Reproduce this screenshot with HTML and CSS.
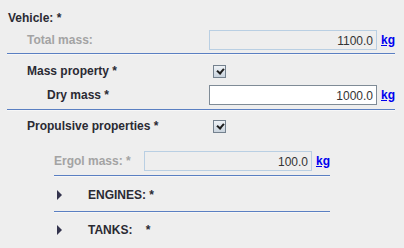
FILE: index.html
```html
<!DOCTYPE html>
<html lang="en">
<head>
    <meta charset="UTF-8">
    <title>Vehicle</title>
    <link rel="stylesheet" href="styles.css">
</head>
<body>
    <div class="panel">
        <div class="row title">Vehicle: *</div>

        <div class="row">
            <span class="label disabled">Total mass:</span>
            <div class="field readonly">1100.0</div>
            <a class="unit" href="#">kg</a>
        </div>
        <div class="sep"></div>

        <div class="row r-mass">
            <span class="label">Mass property *</span>
            <span class="check"></span>
        </div>
        <div class="row r-dry">
            <span class="label sub">Dry mass *</span>
            <div class="field">1000.0</div>
            <a class="unit" href="#">kg</a>
        </div>
        <div class="sep"></div>

        <div class="row r-prop">
            <span class="label">Propulsive properties *</span>
            <span class="check"></span>
        </div>

        <!-- sous-section propulsion -->
        <div class="propulsion">
            <div class="row r-ergol">
                <span class="label disabled">Ergol mass: *</span>
                <div class="field readonly small">100.0</div>
                <a class="unit" href="#">kg</a>
            </div>
            <div class="sep short"></div>
            <div class="row node">
                <span class="arrow"></span>
                <span class="node-label">ENGINES: *</span>
            </div>
            <div class="sep short s-tanks"></div>
            <div class="row node n-tanks">
                <span class="arrow"></span>
                <span class="node-label">TANKS:&nbsp;&nbsp;&nbsp; *</span>
            </div>
        </div>
    </div>
</body>
</html>
```

FILE: styles.css
```css
/* fond et police type Swing */
body {
    margin: 0;
    background: #eeeeee;
    font-family: 'Liberation Sans', Arial, sans-serif;
    font-size: 12px;
    font-weight: bold;
    color: #2a2a33;
}

.panel {
    padding: 8px 9px 0 7px;
}

.row {
    display: flex;
    align-items: center;
    height: 20px;
}

.title {
    padding-left: 1px;
}

.row + .row {
    margin-top: 2px;
}

.label {
    width: 182px;
    padding-left: 20px;
}
.label.sub {
    padding-left: 40px;
    width: 162px;
}
.label.disabled {
    color: #a3a3a3;
}

/* champs de saisie */
.field {
    box-sizing: border-box;
    width: 168px;
    height: 20px;
    border: 1px solid #7f8b96;
    background: white;
    font-weight: normal;
    text-align: right;
    padding: 3px 3px 0 0;
    color: #333;
}
.field.readonly {
    background: #eeeeee;
    border-color: #b9cfe3;
}
.field.small {
    width: 168px;
}

.unit {
    margin-left: 4px;
    color: #0000ee;
    text-decoration: underline;
}

/* case cochée */
.check {
    box-sizing: border-box;
    width: 13px;
    height: 13px;
    margin-left: 4px;
    border: 1px solid #74818e;
    background: linear-gradient(#eef2f6, #c9d3dd);
    position: relative;
}
.check::after {
    content: '';
    position: absolute;
    left: 3px;
    top: 2px;
    width: 5px;
    height: 3px;
    border-left: 2px solid #1e1e1e;
    border-bottom: 2px solid #1e1e1e;
    transform: rotate(-50deg);
}

/* séparateurs */
.sep {
    height: 1px;
    background: #5a7fc2;
    border-bottom: 1px solid #f7f7f7;
    margin-top: 3px;
}
.short {
    margin-top: 4px;
}

.r-mass { margin-top: 6px; }
.row.r-dry { margin-top: 4px; }
.r-dry + .sep { margin-top: 4px; }
.r-prop { margin-top: 5px; }

.propulsion {
    margin-left: 47px;
    width: 276px;
}
.propulsion .label {
    width: 90px;
    padding-left: 0;
}
.r-ergol { margin-top: 15px; }

.row.node {
    margin-top: 8px;
}
.s-tanks { margin-top: 6px; }
.row.n-tanks { margin-top: 7px; }

.arrow {
    width: 0;
    height: 0;
    margin-left: 3px;
    border-top: 5px solid transparent;
    border-bottom: 5px solid transparent;
    border-left: 5px solid #33334d;
}
.node-label {
    margin-left: 26px;
}
```
